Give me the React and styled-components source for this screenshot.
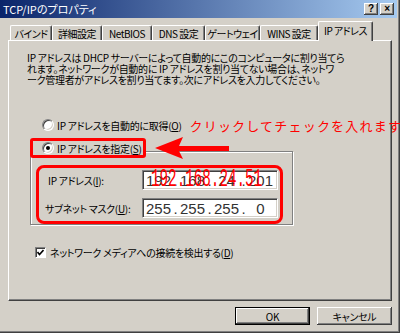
import React from 'react';
import styled, { createGlobalStyle, css } from 'styled-components';

const GlobalStyle = createGlobalStyle`
  html, body {
    margin: 0;
    padding: 0;
    background: #d4d0c8;
  }
  body {
    font-family: "Noto Sans CJK JP", "Liberation Sans", sans-serif;
    font-size: 10px;
    letter-spacing: -0.3px;
    color: #000;
    font-feature-settings: "palt";
  }
`;

const Window = styled.div`
  width: 400px;
  height: 333px;
  box-sizing: border-box;
  background: #d4d0c8;
  display: flex;
  flex-direction: column;
  overflow: hidden;
  box-shadow: inset -1px -1px #404040, inset -2px -2px #808080;
`;

const TitleBar = styled.div`
  flex: none;
  height: 18px;
  margin-right: 3px;
  padding: 0 3px 0 3px;
  display: flex;
  align-items: center;
  justify-content: space-between;
  background: linear-gradient(to right, #0a246a, #a6caf0);
`;

const TitleText = styled.span`
  color: #fff;
  font-size: 11px;
  line-height: 18px;
  letter-spacing: 0;
`;

const TitleButtons = styled.div`
  display: flex;
  gap: 2px;
`;

const TitleButton = styled.span`
  width: 14px;
  height: 12px;
  background: #d4d0c8;
  box-shadow: inset -1px -1px #404040, inset 1px 1px #fff, inset -2px -2px #808080;
  font: bold 10px/12px "Liberation Sans", sans-serif;
  text-align: center;
  color: #000;
`;

const Body = styled.div`
  padding: 0 8px;
  display: flex;
  flex-direction: column;
`;

const TabStrip = styled.div`
  height: 22px;
  padding-left: 2px;
  display: flex;
  align-items: flex-end;
  position: relative;
  z-index: 1;
`;

const Tab = styled.div`
  width: ${p => p.$w}px;
  height: 15px;
  box-sizing: border-box;
  display: flex;
  align-items: center;
  justify-content: center;
  border-top: 1px solid #fff;
  border-left: 1px solid #fff;
  border-right: 1px solid #404040;
  box-shadow: inset -1px 0 #808080;
  border-radius: 2px 2px 0 0;
  background: #d4d0c8;
  white-space: nowrap;
  letter-spacing: -0.5px;
  ${p => p.$active && css`
    height: 20px;
    margin-bottom: -1px;
    padding-bottom: 2px;
  `}
`;

const Panel = styled.div`
  height: 261px;
  box-sizing: border-box;
  border-top: 1px solid #fff;
  border-left: 1px solid #fff;
  border-right: 1px solid #404040;
  border-bottom: 1px solid #404040;
  box-shadow: inset -1px -1px #808080;
  display: flex;
  flex-direction: column;
  align-items: flex-start;
`;

const Description = styled.p`
  margin: 11px 0 0 18px;
  line-height: 11px;
  white-space: nowrap;
`;

const RadioRow = styled.div`
  margin: 32px 0 0 33px;
  height: 16px;
  display: flex;
  align-items: center;
  gap: 3px;
  white-space: nowrap;
`;

const Radio = styled.span`
  flex: none;
  width: 12px;
  height: 12px;
  box-sizing: border-box;
  border-radius: 50%;
  background: #fff;
  border: 1px solid;
  border-color: #808080 #fff #fff #808080;
  box-shadow: inset 1px 1px #404040, inset -1px -1px #d4d0c8;
  display: flex;
  align-items: center;
  justify-content: center;
  &::after {
    content: "";
    width: 4px;
    height: 4px;
    border-radius: 50%;
    background: ${p => (p.$checked ? '#000' : 'transparent')};
  }
`;

const Hint = styled.span`
  margin-left: 5px;
  color: #f00;
  font-size: 13px;
  letter-spacing: 1.2px;
  font-feature-settings: normal;
`;

const GroupBox = styled.div`
  margin: 18px 0 0 21px;
  width: 263px;
  box-sizing: border-box;
  border: 1px solid #808080;
  box-shadow: inset 1px 1px #fff, 1px 1px #fff;
  display: flex;
  flex-direction: column;
`;

const Caption = styled.div`
  margin: -14px 0 0 -1px;
  height: 20px;
  display: flex;
  align-items: center;
`;

const RedBox = styled.div`
  width: 116px;
  height: 20px;
  box-sizing: border-box;
  border: 3px solid #f00;
  border-radius: 3px;
  padding-left: 9px;
  display: flex;
  align-items: center;
  gap: 3px;
  background: #d4d0c8;
  white-space: nowrap;
`;

const Arrow = styled.svg`
  margin-left: 8px;
  flex: none;
`;

const RedFrame = styled.div`
  margin: 7px 9px 0 5px;
  border: 3px solid #f00;
  border-radius: 8px;
  padding: 2px 2px 3px 9px;
  display: flex;
  flex-direction: column;
  gap: 8px;
`;

const FieldRow = styled.div`
  height: 20px;
  display: flex;
  align-items: center;
`;

const FieldLabel = styled.span`
  width: ${p => 94 - (p.$shift || 0)}px;
  margin-left: ${p => p.$shift || 0}px;
  white-space: nowrap;
`;

const IpBox = styled.div`
  position: relative;
  width: 136px;
  height: 20px;
  box-sizing: border-box;
  background: #fff;
  border: 1px solid;
  border-color: #808080 #fff #fff #808080;
  box-shadow: inset 1px 1px #404040, inset -1px -1px #d4d0c8;
  padding-left: 2px;
  display: flex;
  align-items: center;
  font-family: "Liberation Sans", sans-serif;
  font-size: 15px;
  letter-spacing: 0;
  color: #333;
`;

const Segment = styled.span`
  width: 27px;
  text-align: center;
`;

const Dot = styled.span`
  width: 7px;
  text-align: center;
`;

const RedIp = styled.span`
  position: absolute;
  left: 8px;
  top: -1px;
  font-family: "Liberation Mono", monospace;
  font-size: 25px;
  line-height: 20px;
  color: #f00;
  transform: scaleX(0.57);
  transform-origin: left center;
  white-space: nowrap;
`;

const CheckRow = styled.div`
  margin: 21px 0 0 26px;
  height: 13px;
  display: flex;
  align-items: center;
  gap: 4px;
  white-space: nowrap;
`;

const CheckBox = styled.span`
  flex: none;
  width: 11px;
  height: 11px;
  box-sizing: border-box;
  background: #fff;
  border: 1px solid;
  border-color: #808080 #fff #fff #808080;
  box-shadow: inset 1px 1px #404040;
  display: flex;
  align-items: center;
  justify-content: center;
`;

const Footer = styled.div`
  padding-top: 6px;
  display: flex;
  justify-content: flex-end;
  gap: 7px;
`;

const Button = styled.div`
  width: 75px;
  height: 18px;
  box-sizing: border-box;
  display: flex;
  align-items: center;
  justify-content: center;
  background: #d4d0c8;
  box-shadow: inset -1px -1px #404040, inset 1px 1px #fff, inset -2px -2px #808080;
  ${p => p.$default && css`
    border: 1px solid #000;
  `}
`;

const IpField = ({ parts }) => (
  <>
    {parts.map((p, i) => (
      <React.Fragment key={i}>
        {i > 0 && <Dot>.</Dot>}
        <Segment>{p}</Segment>
      </React.Fragment>
    ))}
  </>
);

const tabs = [
  { label: 'バインド', w: 42 },
  { label: '詳細設定', w: 50 },
  { label: 'NetBIOS', w: 50 },
  { label: 'DNS 設定', w: 53 },
  { label: 'ゲートウェイ', w: 55 },
  { label: 'WINS 設定', w: 58 },
  { label: 'IP アドレス', w: 55, active: true },
];

export default function App() {
  return (
    <>
      <GlobalStyle />
      <Window>
        <TitleBar>
          <TitleText>TCP/IPのプロパティ</TitleText>
          <TitleButtons>
            <TitleButton>?</TitleButton>
            <TitleButton>×</TitleButton>
          </TitleButtons>
        </TitleBar>

        <Body>
          <TabStrip>
            {tabs.map(t => (
              <Tab key={t.label} $w={t.w} $active={t.active}>
                {t.label}
              </Tab>
            ))}
          </TabStrip>

          <Panel>
            <Description>
              IP アドレスは DHCP サーバーによって自動的にこのコンピュータに割り当てら
              <br />
              れます。ネットワークが自動的に IP アドレスを割り当てない場合は、ネットワ
              <br />
              ーク管理者がアドレスを割り当てます。次にアドレスを入力してください。
            </Description>

            <RadioRow>
              <Radio />
              <span>IP アドレスを自動的に取得(<u>O</u>)</span>
              <Hint>クリックしてチェックを入れます</Hint>
            </RadioRow>

            <GroupBox>
              <Caption>
                <RedBox>
                  <Radio $checked />
                  <span>IP アドレスを指定(<u>S</u>)</span>
                </RedBox>
                <Arrow width="76" height="24" viewBox="0 0 76 24">
                  <polygon
                    points="1,12 29,1 25,10 75,10 75,15 25,15 29,23"
                    fill="#f00"
                  />
                </Arrow>
              </Caption>

              <RedFrame>
                <FieldRow>
                  <FieldLabel>IP アドレス(<u>I</u>):</FieldLabel>
                  <IpBox>
                    <IpField parts={['192', '168', '24', '201']} />
                    <RedIp>192.168.24.51</RedIp>
                  </IpBox>
                </FieldRow>
                <FieldRow>
                  <FieldLabel $shift={-3}>サブネット マスク(<u>U</u>):</FieldLabel>
                  <IpBox>
                    <IpField parts={['255', '255', '255', '0']} />
                  </IpBox>
                </FieldRow>
              </RedFrame>
            </GroupBox>

            <CheckRow>
              <CheckBox>
                <svg width="7" height="7" viewBox="0 0 7 7">
                  <polyline points="0.5,3 2.5,5.5 6.5,1" fill="none" stroke="#000" strokeWidth="1.6" />
                </svg>
              </CheckBox>
              <span>ネットワーク メディアへの接続を検出する(<u>D</u>)</span>
            </CheckRow>
          </Panel>

          <Footer>
            <Button $default>OK</Button>
            <Button>キャンセル</Button>
          </Footer>
        </Body>
      </Window>
    </>
  );
}
